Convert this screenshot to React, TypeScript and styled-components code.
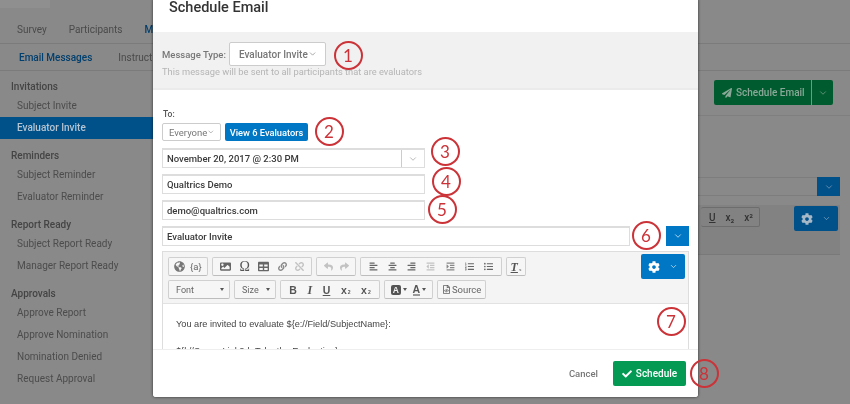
import * as React from 'react'
import styled, { createGlobalStyle } from 'styled-components'
import { ChevronDown } from 'lucide-react'
import {
  FaAlignCenter,
  FaAlignLeft,
  FaAlignRight,
  FaCheck,
  FaCog,
  FaGlobeAmericas,
  FaImage,
  FaIndent,
  FaLink,
  FaListOl,
  FaListUl,
  FaOutdent,
  FaPaperPlane,
  FaReply,
  FaShare,
  FaTable,
  FaUnlink,
  FaRegFileCode,
} from 'react-icons/fa'

const GlobalStyle = createGlobalStyle`
  html, body { margin: 0; padding: 0; }
  body {
    font-family: Roboto, "Liberation Sans", sans-serif;
    color: #333;
  }
  * { box-sizing: border-box; }
`

const Screen = styled.div`
  position: relative;
  width: 850px;
  height: 404px;
  overflow: hidden;
  background: #898989;
  filter: blur(0.35px);
`

/* dimmed page behind the dialog */
const TopBar = styled.div`
  height: 16px;
`

const Logo = styled.div`
  width: 50px;
  height: 8px;
  background: #8f8f8f;
`

const MainTabs = styled.div`
  display: flex;
  gap: 22px;
  height: 28px;
  padding: 6px 0 0 17px;
  border-bottom: 1px solid #7b7b7b;
  font-size: 10px;
  line-height: 16px;
  color: #4a4a4a;
`

const SubTabs = styled.div`
  display: flex;
  gap: 26px;
  height: 27px;
  padding: 6px 0 0 19px;
  border-bottom: 1px solid #7b7b7b;
  font-size: 10px;
  line-height: 16px;
  color: #4a4a4a;
`

const ActiveTab = styled.span`
  font-weight: 500;
  color: #003f6e;
`

const Body = styled.div`
  display: flex;
`

const Sidebar = styled.div`
  width: 153px;
  padding-top: 8px;
  flex: none;
`

const SideGroup = styled.div`
  margin-bottom: 9px;
`

const SideTitle = styled.div`
  height: 16px;
  padding-left: 11px;
  font-size: 10px;
  line-height: 16px;
  font-weight: 500;
  color: #444;
`

const SideItem = styled.div<{ $active?: boolean }>`
  height: 22px;
  padding-left: 17px;
  font-size: 10px;
  line-height: 22px;
  font-weight: ${p => (p.$active ? 500 : 400)};
  color: ${p => (p.$active ? '#b4c4d0' : '#4c4c4c')};
  background: ${p => (p.$active ? '#00508a' : 'transparent')};
`

const BehindRight = styled.div`
  flex: 1;
  padding: 9px 10px 0 0;
`

const BehindActions = styled.div`
  display: flex;
  justify-content: flex-end;
  margin-right: 7px;
`

const GreenSplit = styled.div`
  display: flex;
  width: 119px;
  height: 25px;
  border-radius: 2px;
  background: #005c2e;
  color: #8aa898;
  font-size: 10px;
  font-weight: 500;
  align-items: center;
`

const GreenLabel = styled.div`
  display: flex;
  align-items: center;
  gap: 4px;
  flex: 1;
  height: 100%;
  padding-left: 8px;
  border-right: 1px solid #6f9a83;
`

const GreenCaret = styled.div`
  display: flex;
  justify-content: center;
  width: 21px;
`

const BehindRule = styled.div`
  height: 1px;
  margin: 10px -10px 0 0;
  background: #7f7f7f;
`

const BehindField = styled.div`
  display: flex;
  justify-content: flex-end;
  height: 19px;
  margin-top: 61px;
  border-top: 1px solid #7d7d7d;
  border-bottom: 1px solid #7d7d7d;
`

const BehindBlue = styled.div`
  display: flex;
  align-items: center;
  justify-content: center;
  width: 23px;
  margin-top: -1px;
  margin-bottom: -1px;
  background: #00508a;
  color: #8fa8bb;
`

const BehindEditor = styled.div`
  display: flex;
  justify-content: flex-end;
  gap: 34px;
  height: 50px;
  margin-top: 9px;
  padding: 1px 2px 0 0;
  background: #828282;
  border-bottom: 1px solid #797979;
`

const BehindTool = styled.div`
  display: flex;
  align-items: center;
  height: 20px;
  margin-top: 1px;
  padding: 0 6px 0 8px;
  gap: 10px;
  border: 1px solid #6d6d6d;
  border-left: none;
  border-radius: 2px;
  font-size: 10px;
  font-weight: 500;
  color: #333;
`

const BehindGear = styled.div`
  display: flex;
  align-items: center;
  justify-content: center;
  gap: 9px;
  width: 44px;
  height: 25px;
  border-radius: 2px;
  background: #00508a;
  color: #a4b8c8;
`

/* dialog */
const Modal = styled.div`
  position: absolute;
  left: 153px;
  top: -1px;
  display: flex;
  flex-direction: column;
  width: 545px;
  height: 398px;
  background: #fff;
  border-radius: 0 0 3px 3px;
  box-shadow: 0 0 3px rgba(0, 0, 0, 0.7);
`

const ModalTitle = styled.h2`
  flex: none;
  height: 33px;
  margin: 0;
  padding: 0 0 0 16px;
  font-size: 14.5px;
  line-height: 18px;
  font-weight: 500;
  color: #333;
`

const TypeBand = styled.div`
  flex: none;
  height: 58px;
  padding: 10px 9px 0;
  background: #f1f1f1;
  border-bottom: 2px solid #ebebeb;
`

const TypeRow = styled.div`
  display: flex;
  align-items: center;
  gap: 3px;
`

const TypeLabel = styled.span`
  font-size: 9.5px;
  font-weight: 500;
  white-space: nowrap;
  color: #777;
`

const TypeSelect = styled.div`
  display: flex;
  align-items: center;
  justify-content: space-between;
  width: 97px;
  height: 24px;
  padding: 0 8px 0 9px;
  background: #fff;
  border: 1px solid #ccc;
  border-radius: 2px;
  font-size: 10px;
  font-weight: 500;
  white-space: nowrap;
  color: #777;
`

const Hint = styled.div`
  margin-top: 0;
  font-size: 9.3px;
  line-height: 12px;
  color: #b5b5b5;
`

const Form = styled.div`
  display: flex;
  flex: none;
  flex-direction: column;
  height: 259px;
  padding: 18px 9px 0;
  overflow: hidden;
`

const ToLabel = styled.div`
  flex: none;
  height: 15px;
  padding-left: 1px;
  font-size: 8.5px;
  line-height: 12px;
  font-weight: 500;
  color: #555;
`

const ToRow = styled.div`
  display: flex;
  flex: none;
  gap: 4px;
  height: 18px;
  margin-bottom: 7px;
`

const EveryoneSelect = styled.div`
  display: flex;
  align-items: center;
  justify-content: space-between;
  width: 59px;
  padding: 0 5px 0 6px;
  border: 1px solid #ccc;
  border-radius: 2px;
  font-size: 9.5px;
  color: #777;
`

const BlueButton = styled.div`
  display: flex;
  align-items: center;
  justify-content: center;
  width: 83px;
  background: #0077c5;
  border-radius: 2px;
  color: #fff;
  font-size: 9.3px;
  font-weight: 500;
`

const InputBox = styled.div<{ $width: number }>`
  display: flex;
  align-items: center;
  justify-content: space-between;
  flex: none;
  width: ${p => p.$width}px;
  height: 20px;
  margin-bottom: 6px;
  padding-left: 4px;
  border: 1px solid #ddd;
  border-top-width: 2px;
  font-size: 9.5px;
  font-weight: 500;
  color: #3a3a3a;
`

const InputCaret = styled.div`
  display: flex;
  align-items: center;
  justify-content: center;
  width: 23px;
  height: 100%;
  border-left: 1px solid #ccc;
  color: #999;
`

const SubjectRow = styled.div`
  display: flex;
  justify-content: space-between;
  flex: none;
  margin-bottom: 5px;
`

const SubjectInput = styled(InputBox)`
  margin-bottom: 0;
`

const SubjectCaret = styled.div`
  display: flex;
  align-items: center;
  justify-content: center;
  width: 23px;
  height: 20px;
  background: #0077c5;
  color: #fff;
`

const Editor = styled.div`
  flex: 1;
  border: 1px solid #ddd;
  border-bottom: none;
`

const ToolArea = styled.div`
  position: relative;
  display: flex;
  flex-direction: column;
  gap: 4px;
  height: 52px;
  padding: 5px 5px 0;
  background: #f4f4f4;
  border-bottom: 1px solid #e2e2e2;
`

const ToolRow = styled.div`
  display: flex;
  gap: 4px;
  height: 19px;
`

const ToolGroup = styled.div<{ $width: number }>`
  display: flex;
  align-items: center;
  justify-content: space-around;
  width: ${p => p.$width}px;
  padding: 0 3px;
  background: #f6f6f6;
  border: 1px solid #d0d0d0;
  border-bottom-color: #bdbdbd;
  border-radius: 2px;
  font-size: 9.5px;
  color: #666;
  svg { flex: none; }
`

const ToolDim = styled.span`
  display: inline-flex;
  color: #c2c2c2;
`

const ToolGlyph = styled.span<{ $size?: number }>`
  font-family: "Liberation Serif", serif;
  font-size: ${p => p.$size ?? 14}px;
  line-height: 1;
  color: #555;
`

const ToolLetter = styled.span`
  font-family: "Liberation Sans", sans-serif;
  font-size: 10.5px;
  font-weight: 700;
  color: #555;
`

const ToolScript = styled.span`
  font-size: 5px;
  margin-left: 1px;
`

const ColorChip = styled.span`
  display: inline-flex;
  align-items: center;
  justify-content: center;
  width: 10px;
  height: 10px;
  background: #555;
  border-radius: 2px;
  font-family: "Liberation Sans", sans-serif;
  font-size: 8.5px;
  font-weight: 700;
  color: #f4f4f4;
`

const ColorLetter = styled(ToolLetter)`
  border-bottom: 2px solid #999;
  line-height: 10px;
`

const ColorPair = styled.span`
  display: inline-flex;
  align-items: center;
  gap: 2px;
`

const ToolSelect = styled(ToolGroup)`
  justify-content: space-between;
  padding: 0 5px 0 7px;
  font-size: 9px;
  color: #666;
`

const Triangle = styled.span`
  width: 0;
  height: 0;
  border-left: 2.5px solid transparent;
  border-right: 2.5px solid transparent;
  border-top: 3px solid #555;
`

const GearButton = styled.div`
  position: absolute;
  top: 2px;
  right: 3px;
  display: flex;
  align-items: center;
  justify-content: center;
  gap: 9px;
  width: 44px;
  height: 25px;
  background: #0077c5;
  border-radius: 2px;
  color: #fff;
`

const EditorText = styled.div`
  padding: 7px 13px 0;
  font-family: "Liberation Sans", Arial, sans-serif;
  font-size: 9.2px;
  line-height: 27px;
  color: #444;
`

const Footer = styled.div`
  display: flex;
  align-items: center;
  justify-content: flex-end;
  flex: 1;
  gap: 15px;
  padding: 0 12px 0 0;
  background: #fff;
  border-top: 1px solid #eee;
  border-radius: 0 0 3px 3px;
`

const CancelLink = styled.span`
  font-size: 9.5px;
  font-weight: 500;
  color: #777;
`

const ScheduleButton = styled.div`
  display: flex;
  align-items: center;
  justify-content: center;
  gap: 4px;
  width: 73px;
  height: 25px;
  background: #049a53;
  border-radius: 2px;
  color: #fff;
  font-size: 10px;
  font-weight: 500;
`

const Callout = styled.div<{ $x: number; $y: number }>`
  position: absolute;
  left: ${p => p.$x - 14.5}px;
  top: ${p => p.$y - 14.5}px;
  display: flex;
  align-items: center;
  justify-content: center;
  width: 29px;
  height: 29px;
  border: 2.5px solid #cb3338;
  border-radius: 50%;
  font-family: Lato, "Open Sans", sans-serif;
  font-size: 17px;
  color: #cb3338;
`

const sideGroups = [
  { title: 'Invitations', items: ['Subject Invite', 'Evaluator Invite'] },
  { title: 'Reminders', items: ['Subject Reminder', 'Evaluator Reminder'] },
  { title: 'Report Ready', items: ['Subject Report Ready', 'Manager Report Ready'] },
  { title: 'Approvals', items: ['Approve Report', 'Approve Nomination', 'Nomination Denied', 'Request Approval'] },
]

const callouts = [
  { n: 1, x: 348, y: 55 },
  { n: 2, x: 329, y: 131 },
  { n: 3, x: 445, y: 151 },
  { n: 4, x: 446, y: 181 },
  { n: 5, x: 442, y: 209 },
  { n: 6, x: 646, y: 235 },
  { n: 7, x: 671, y: 321 },
  { n: 8, x: 704, y: 373 },
]

const Caret: React.FC<{ size?: number }> = ({ size = 10 }) => <ChevronDown size={size} strokeWidth={1.6} />

export default function App() {
  return (
    <Screen>
      <GlobalStyle />
      <TopBar>
        <Logo />
      </TopBar>
      <MainTabs>
        <span>Survey</span>
        <span>Participants</span>
        <ActiveTab>Messages</ActiveTab>
      </MainTabs>
      <SubTabs>
        <ActiveTab>Email Messages</ActiveTab>
        <span>Instructions</span>
      </SubTabs>
      <Body>
        <Sidebar>
          {sideGroups.map(group => (
            <SideGroup key={group.title}>
              <SideTitle>{group.title}</SideTitle>
              {group.items.map(item => (
                <SideItem key={item} $active={item === 'Evaluator Invite'}>
                  {item}
                </SideItem>
              ))}
            </SideGroup>
          ))}
        </Sidebar>
        <BehindRight>
          <BehindActions>
            <GreenSplit>
              <GreenLabel>
                <FaPaperPlane size={10} />
                Schedule Email
              </GreenLabel>
              <GreenCaret>
                <Caret />
              </GreenCaret>
            </GreenSplit>
          </BehindActions>
          <BehindRule />
          <BehindField>
            <BehindBlue>
              <Caret />
            </BehindBlue>
          </BehindField>
          <BehindEditor>
            <BehindTool>
              <u>U</u>
              <span>x₂</span>
              <span>x²</span>
            </BehindTool>
            <BehindGear>
              <FaCog size={12} />
              <Caret size={9} />
            </BehindGear>
          </BehindEditor>
        </BehindRight>
      </Body>

      <Modal>
        <ModalTitle>Schedule Email</ModalTitle>
        <TypeBand>
          <TypeRow>
            <TypeLabel>Message Type:</TypeLabel>
            <TypeSelect>
              Evaluator Invite
              <Caret />
            </TypeSelect>
          </TypeRow>
          <Hint>This message will be sent to all participants that are evaluators</Hint>
        </TypeBand>
        <Form>
          <ToLabel>To:</ToLabel>
          <ToRow>
            <EveryoneSelect>
              Everyone
              <Caret />
            </EveryoneSelect>
            <BlueButton>View 6 Evaluators</BlueButton>
          </ToRow>
          <InputBox $width={263}>
            November 20, 2017 @ 2:30 PM
            <InputCaret>
              <Caret />
            </InputCaret>
          </InputBox>
          <InputBox $width={263}>Qualtrics Demo</InputBox>
          <InputBox $width={263}>demo@qualtrics.com</InputBox>
          <SubjectRow>
            <SubjectInput $width={468}>Evaluator Invite</SubjectInput>
            <SubjectCaret>
              <Caret />
            </SubjectCaret>
          </SubjectRow>
          <Editor>
            <ToolArea>
              <ToolRow>
                <ToolGroup $width={40}>
                  <FaGlobeAmericas size={11} color="#777" />
                  <span>{'{a}'}</span>
                </ToolGroup>
                <ToolGroup $width={100}>
                  <FaImage size={11} />
                  <ToolGlyph>Ω</ToolGlyph>
                  <FaTable size={11} />
                  <FaLink size={9} color="#888" />
                  <ToolDim>
                    <FaUnlink size={9} />
                  </ToolDim>
                </ToolGroup>
                <ToolGroup $width={40}>
                  <ToolDim>
                    <FaReply size={9} />
                  </ToolDim>
                  <ToolDim>
                    <FaShare size={9} />
                  </ToolDim>
                </ToolGroup>
                <ToolGroup $width={142}>
                  <FaAlignLeft size={9} />
                  <FaAlignCenter size={9} />
                  <FaAlignRight size={9} />
                  <ToolDim>
                    <FaOutdent size={9} />
                  </ToolDim>
                  <FaIndent size={9} color="#888" />
                  <FaListOl size={9} />
                  <FaListUl size={9} />
                </ToolGroup>
                <ToolGroup $width={20}>
                  <ToolGlyph $size={12}>
                    <b>
                      <i>
                        <u>T</u>
                      </i>
                    </b>
                    <ToolScript>x</ToolScript>
                  </ToolGlyph>
                </ToolGroup>
              </ToolRow>
              <ToolRow>
                <ToolSelect $width={62}>
                  Font
                  <Triangle />
                </ToolSelect>
                <ToolSelect $width={42}>
                  Size
                  <Triangle />
                </ToolSelect>
                <ToolGroup $width={100}>
                  <ToolLetter>B</ToolLetter>
                  <ToolGlyph $size={12}>
                    <b>
                      <i>I</i>
                    </b>
                  </ToolGlyph>
                  <ToolLetter>
                    <u>U</u>
                  </ToolLetter>
                  <ToolLetter>
                    x<ToolScript>2</ToolScript>
                  </ToolLetter>
                  <ToolLetter>
                    x<ToolScript>2</ToolScript>
                  </ToolLetter>
                </ToolGroup>
                <ToolGroup $width={49}>
                  <ColorPair>
                    <ColorChip>A</ColorChip>
                    <Triangle />
                  </ColorPair>
                  <ColorPair>
                    <ColorLetter>A</ColorLetter>
                    <Triangle />
                  </ColorPair>
                </ToolGroup>
                <ToolGroup $width={49}>
                  <FaRegFileCode size={9} />
                  Source
                </ToolGroup>
              </ToolRow>
              <GearButton>
                <FaCog size={12} />
                <Caret size={9} />
              </GearButton>
            </ToolArea>
            <EditorText>
              You are invited to evaluate {'${e://Field/SubjectName}'}:
              <br />
              {'${l://SurveyLink?d=Take the Evaluation}'}
            </EditorText>
          </Editor>
        </Form>
        <Footer>
          <CancelLink>Cancel</CancelLink>
          <ScheduleButton>
            <FaCheck size={10} />
            Schedule
          </ScheduleButton>
        </Footer>
      </Modal>

      {callouts.map(c => (
        <Callout key={c.n} $x={c.x} $y={c.y}>
          {c.n}
        </Callout>
      ))}
    </Screen>
  )
}
